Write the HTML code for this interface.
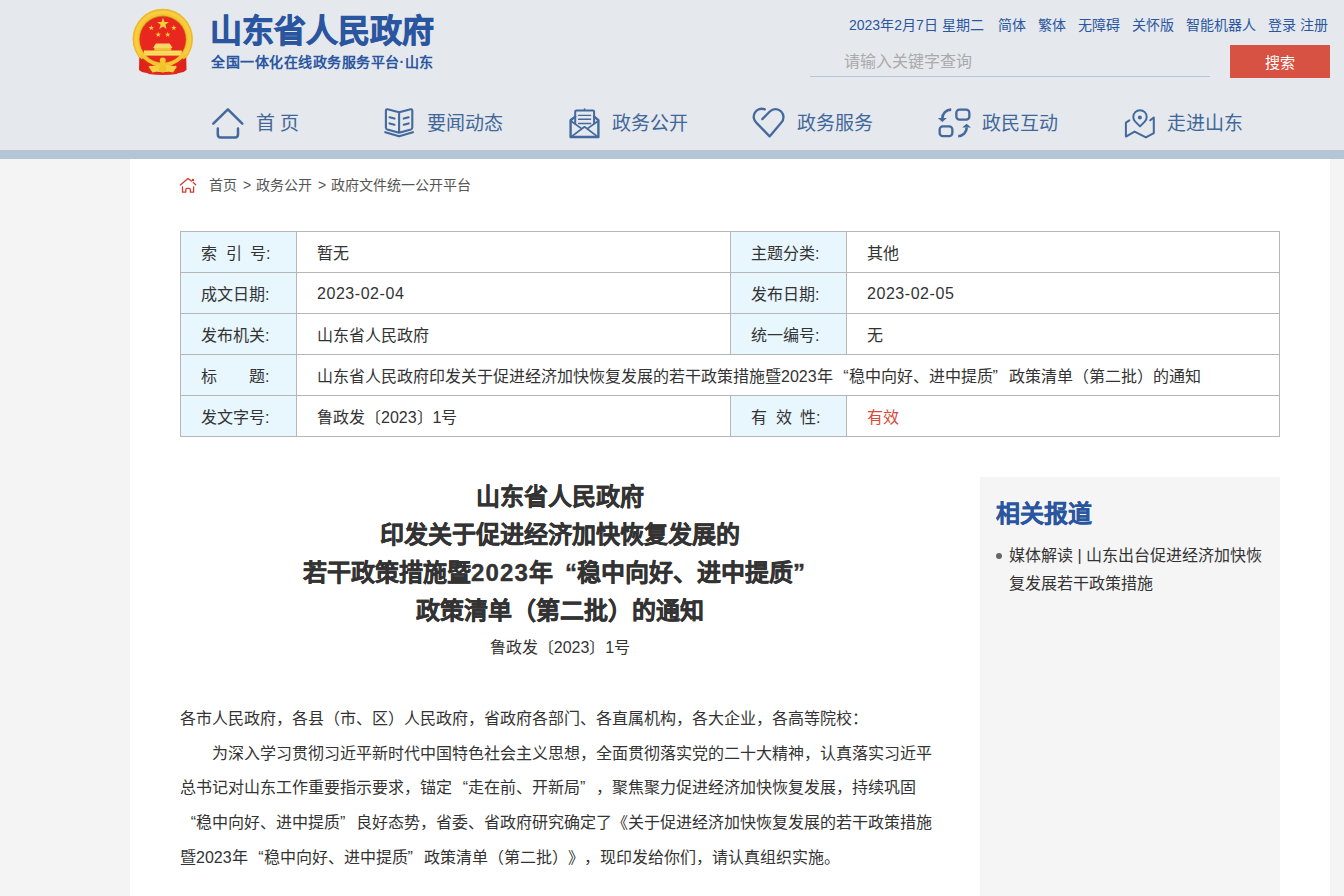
<!DOCTYPE html>
<html lang="zh-CN">
<head>
<meta charset="utf-8">
<title>山东省人民政府</title>
<style>
*{margin:0;padding:0;box-sizing:border-box}
html,body{width:1344px;height:896px;overflow:hidden}
body{text-spacing-trim:space-all;position:relative;background:#f4f4f4;font-family:"Liberation Sans",sans-serif;color:#333}
.abs{position:absolute;white-space:nowrap}
#hdr{position:absolute;left:0;top:0;width:1344px;height:150px;background:#e5e8ed}
#band{position:absolute;left:0;top:150px;width:1344px;height:9px;background:#b4c5d6}
#main{position:absolute;left:130px;top:159px;width:1200px;height:737px;background:#fff}
.t1{left:210px;top:11px;font-size:32px;font-weight:bold;color:#2a56a0;-webkit-text-stroke:0.8px #2a56a0;line-height:40px}
.t2{left:211px;top:52px;font-size:14px;font-weight:bold;color:#2a56a0;line-height:20px;letter-spacing:0.5px}
.top{top:15px;font-size:14px;color:#2a56a0;line-height:20px}
.srch{left:844px;top:51px;font-size:16px;color:#aaa;line-height:22px}
#uline{position:absolute;left:810px;top:76px;width:400px;height:1px;background:#b7c6d8}
#btn{position:absolute;left:1230px;top:45px;width:100px;height:33px;background:#d85243;color:#fff;font-size:15px;line-height:35px;text-align:center}
.nav{top:112px;font-size:19px;color:#3f6799;line-height:24px}
.bc{top:175px;font-size:14px;color:#555;line-height:20px}
table{position:absolute;left:180px;top:231px;width:1100px;border-collapse:collapse;font-size:16px;color:#333}
td{border:1px solid #b6b6b6;height:41px;padding:0 0 0 20px;white-space:nowrap}
td.l{background:#e8f6fe;width:116px}
.h{font-size:24px;font-weight:bold;color:#333;-webkit-text-stroke:0.4px #333;line-height:38px;text-align:center;left:180px;width:760px}
.p{font-size:16px;color:#333;line-height:34.7px}
#side{position:absolute;left:980px;top:477px;width:300px;height:419px;background:#f5f5f5}
.ql,.qr{display:inline-block;width:1em}.ql{text-align:right}.qr{text-align:left}
.g{display:inline-block;width:8.5px}.g2{display:inline-block;width:32px}
</style>
</head>
<body>
<div id="hdr"></div>
<div id="band"></div>
<div id="main"></div>

<!-- emblem -->
<svg class="abs" style="left:125px;top:0px" width="80" height="80" viewBox="0 0 80 80">
  <circle cx="37.75" cy="39" r="30.2" fill="#efb82c"/>
  <circle cx="37.75" cy="39" r="28.6" fill="#f7cf3e"/>
  <circle cx="37.75" cy="39" r="25.5" fill="#f4c435"/>
  <circle cx="37.75" cy="39.3" r="23.7" fill="#c9901a"/>
  <circle cx="37.75" cy="39.5" r="23" fill="#e8281e"/>
  <path d="M38.00,17.70 L39.46,21.89 L43.90,21.98 L40.36,24.67 L41.64,28.92 L38.00,26.38 L34.36,28.92 L35.64,24.67 L32.10,21.98 L36.54,21.89Z" fill="#f3cf3c"/>
  <path d="M26.30,25.00 L26.98,26.96 L29.06,27.00 L27.40,28.26 L28.00,30.25 L26.30,29.06 L24.60,30.25 L25.20,28.26 L23.54,27.00 L25.62,26.96Z" fill="#f3cf3c"/>
  <path d="M48.90,25.00 L49.58,26.96 L51.66,27.00 L50.00,28.26 L50.60,30.25 L48.90,29.06 L47.20,30.25 L47.80,28.26 L46.14,27.00 L48.22,26.96Z" fill="#f3cf3c"/>
  <path d="M33.20,31.70 L33.88,33.66 L35.96,33.70 L34.30,34.96 L34.90,36.95 L33.20,35.76 L31.50,36.95 L32.10,34.96 L30.44,33.70 L32.52,33.66Z" fill="#f3cf3c"/>
  <path d="M42.70,31.70 L43.38,33.66 L45.46,33.70 L43.80,34.96 L44.40,36.95 L42.70,35.76 L41.00,36.95 L41.60,34.96 L39.94,33.70 L42.02,33.66Z" fill="#f3cf3c"/>
  <path d="M28.2 48 L29.5 45.5 L31 43.4 H44.6 L46.1 45.5 L47.5 48 Z" fill="#f7d866"/>
  <rect x="29.3" y="48" width="17" height="2.6" fill="#f2c23a"/>
  <rect x="18.9" y="50.4" width="37.8" height="5.3" fill="#f5cc3a"/>
  <rect x="18.9" y="51.3" width="37.8" height="1.4" fill="#fbe27a"/>
  <rect x="20" y="53.6" width="35.6" height="1.2" fill="#fbe27a"/>
  <path d="M14.3 56 L24 61 L26 74 L17 72 L14 70 Z" fill="#de2418"/>
  <path d="M61.2 56 L51.5 61 L49.5 74 L58.5 72 L61.5 70 Z" fill="#de2418"/>
  <path d="M22 66 Q37.75 78 53.5 66 L52 74 Q37.75 76 23.5 74 Z" fill="#e02a1c"/>
  <path d="M14 55 Q37.75 76 61.5 55" fill="none" stroke="#f4c52e" stroke-width="3.6"/>
  <path d="M17 59 Q37.75 77 58.5 59" fill="none" stroke="#e02a1c" stroke-width="2.2"/>
  <circle cx="37.75" cy="60.6" r="3" fill="#f5c830"/>
  <path d="M23.5 66.5 Q37.75 64 52 66.5 L48 72.5 Q37.75 70 27.5 72.5 Z" fill="#f6d040"/>
  <circle cx="37.75" cy="68.8" r="3.8" fill="#f3c02a"/>
</svg>
<div class="abs t1">山东省人民政府</div>
<div class="abs t2">全国一体化在线政务服务平台·山东</div>

<div class="abs top" style="left:849px">2023年2月7日 星期二</div>
<div class="abs top" style="left:998px">简体</div>
<div class="abs top" style="left:1038px">繁体</div>
<div class="abs top" style="left:1078px">无障碍</div>
<div class="abs top" style="left:1132px">关怀版</div>
<div class="abs top" style="left:1186px">智能机器人</div>
<div class="abs top" style="left:1268px">登录 注册</div>

<div class="abs srch">请输入关键字查询</div>
<div id="uline"></div>
<div id="btn">搜索</div>

<!-- nav icons -->
<svg class="abs" style="left:210px;top:105px" width="36" height="36" viewBox="0 0 36 36" fill="none" stroke="#44699c" stroke-width="2.5" stroke-linecap="round" stroke-linejoin="round">
  <path d="M3.3 18.6 L17.9 4.4 L32.3 18.6"/><path d="M7.8 23.4 V29.6 Q7.8 32.5 10.6 32.5 H25.2 Q28 32.5 28 29.6 V23.4"/>
</svg>
<div class="abs nav" style="left:256px">首 页</div>
<svg class="abs" style="left:380px;top:104px" width="40" height="38" viewBox="0 0 40 38" fill="none" stroke="#44699c" stroke-width="2.1" stroke-linecap="round" stroke-linejoin="round">
  <path d="M19.1 8.3 L7.5 5.3 Q5.9 5 5.9 6.8 V23.5 Q5.9 25 7.3 25.5 L19.1 28.8 L30.9 25.5 Q32.3 25 32.3 23.5 V6.8 Q32.3 5 30.7 5.3 Z M19.1 8.3 V28.8"/>
  <path d="M5.3 28.2 L19.1 32.3 L32.9 28.2" stroke-width="2.2"/>
  <path d="M9.5 13.2 L14.5 14.6 M9.5 19.4 L14.5 20.8 M23.7 14.6 L28.7 13.2 M23.7 20.8 L28.7 19.4"/>
</svg>
<div class="abs nav" style="left:427px">要闻动态</div>
<svg class="abs" style="left:565px;top:104px" width="40" height="38" viewBox="0 0 40 38" fill="none" stroke="#44699c" stroke-linecap="round" stroke-linejoin="round">
  <path d="M10.2 19.5 V7.6 Q10.2 6.4 11.4 6.4 H27.9 Q29.1 6.4 29.1 7.6 V19.5" stroke-width="2"/>
  <circle cx="19.6" cy="5.2" r="0.9" fill="#44699c" stroke="none"/>
  <path d="M13.6 11.4 H25.6 M13.6 15.2 H25.6 M13.6 19.5 H25.6" stroke-width="1.4"/>
  <path d="M10.2 12.6 L5.6 16.2 V33 H33.4 V16.2 L29.1 12.6" stroke-width="2.4"/>
  <path d="M6.3 17.2 L16.2 24.4 M32.7 17.2 L22.8 24.4 M6.8 32.4 L19.5 22.8 L32.2 32.4" stroke-width="1.7"/>
</svg>
<div class="abs nav" style="left:612px">政务公开</div>
<svg class="abs" style="left:750px;top:104px" width="40" height="38" viewBox="0 0 40 38" fill="none" stroke="#44699c" stroke-width="2.3" stroke-linecap="round" stroke-linejoin="round">
  <path d="M14.85 5.4 A8 8 0 0 0 6.54 18.86 L19.6 32.4 L31.16 18.76 A8 8 0 0 0 19.84 7.44 L12.3 15.1"/>
</svg>
<div class="abs nav" style="left:797px">政务服务</div>
<svg class="abs" style="left:934px;top:104px" width="40" height="38" viewBox="0 0 40 38" fill="none" stroke="#44699c" stroke-width="2.3">
  <rect x="22.35" y="5.65" width="13" height="9.95" rx="3.2"/>
  <rect x="5.65" y="22.35" width="12.7" height="9.8" rx="3.2"/>
  <path d="M17.2 5.6 A8.8 8.8 0 0 0 8.3 14.4" stroke-width="2.6"/>
  <path d="M3.8 13.9 L12.8 13.9 L8.3 17.9 Z" fill="#44699c" stroke="none"/>
  <path d="M24.2 32.2 A8.5 8.5 0 0 0 32.7 23.6" stroke-width="2.6"/>
  <path d="M28.2 23.6 L37 23.6 L32.6 19.8 Z" fill="#44699c" stroke="none"/>
</svg>
<div class="abs nav" style="left:982px">政民互动</div>
<svg class="abs" style="left:1120px;top:104px" width="40" height="38" viewBox="0 0 40 38" fill="none" stroke="#44699c" stroke-width="2" stroke-linecap="round" stroke-linejoin="round">
  <path d="M20 22.4 L15.26 17.64 A6.7 6.7 0 1 1 24.74 17.64 Z"/><circle cx="19.9" cy="13.5" r="2" fill="#44699c" stroke="none"/>
  <path d="M9.4 16.4 L5.9 18.7 V32.6 L14.6 27.6 L25.9 33.4 L33.8 29.2 V13.5 L30.2 16.3"/>
</svg>
<div class="abs nav" style="left:1167px">走进山东</div>

<!-- breadcrumb -->
<svg class="abs" style="left:176px;top:174px" width="24" height="22" viewBox="0 0 24 22" fill="none" stroke="#d23c30" stroke-width="1.3" stroke-linecap="round" stroke-linejoin="round">
  <path d="M4.4 11 L12 4.4 L15.4 7.1 M17.2 8.4 L19.7 10.8"/><circle cx="17" cy="5.9" r="0.6" fill="#d23c30"/>
  <path d="M6.5 12.8 V18.2 H9.8 V15.6 Q9.8 14.3 11.1 14.3 H13.1 Q14.4 14.3 14.4 15.6 V18.2 H17.6 V12.8"/>
</svg>
<div class="abs bc" style="left:209px">首页</div><div class="abs bc" style="left:243px">&gt;</div><div class="abs bc" style="left:256px">政务公开</div><div class="abs bc" style="left:318px">&gt;</div><div class="abs bc" style="left:331px">政府文件统一公开平台</div>

<table>
<tr><td class="l">索<i class="g"></i>引<i class="g"></i>号:</td><td style="width:434px">暂无</td><td class="l">主题分类:</td><td>其他</td></tr>
<tr><td class="l">成文日期:</td><td><span style="letter-spacing:0.55px;position:relative;top:1px">2023-02-04</span></td><td class="l">发布日期:</td><td><span style="letter-spacing:0.55px;position:relative;top:1px">2023-02-05</span></td></tr>
<tr><td class="l">发布机关:</td><td>山东省人民政府</td><td class="l">统一编号:</td><td>无</td></tr>
<tr><td class="l">标<i class="g2"></i>题:</td><td colspan="3">山东省人民政府印发关于促进经济加快恢复发展的若干政策措施暨2023年<span class="ql">“</span>稳中向好、进中提质<span class="qr">”</span>政策清单（第二批）的通知</td></tr>
<tr><td class="l">发文字号:</td><td>鲁政发〔2023〕1号</td><td class="l">有<i class="g"></i>效<i class="g"></i>性:</td><td style="color:#d9493a">有效</td></tr>
</table>

<div class="abs h" style="top:478px">山东省人民政府<br>印发关于促进经济加快恢复发展的<br>若干政策措施暨<span style="letter-spacing:1.2px">2023</span>年<span class="ql">“</span>稳中向好、进中提质<span class="qr">”</span><br>政策清单（第二批）的通知</div>
<div class="abs" style="left:180px;width:760px;text-align:center;top:637px;font-size:16px;line-height:22px;color:#333">鲁政发〔2023〕1号</div>

<div class="abs p" style="left:180px;top:702px">各市人民政府，各县（市、区）人民政府，省政府各部门、各直属机构，各大企业，各高等院校：<br>
&emsp;&emsp;为深入学习贯彻习近平新时代中国特色社会主义思想，全面贯彻落实党的二十大精神，认真落实习近平<br>
总书记对山东工作重要指示要求，锚定<span class="ql">“</span>走在前、开新局<span class="qr">”</span>，聚焦聚力促进经济加快恢复发展，持续巩固<br>
<span class="ql">“</span>稳中向好、进中提质<span class="qr">”</span>良好态势，省委、省政府研究确定了《关于促进经济加快恢复发展的若干政策措施<br>
暨2023年<span class="ql">“</span>稳中向好、进中提质<span class="qr">”</span>政策清单（第二批）》，现印发给你们，请认真组织实施。</div>

<div id="side"></div>
<div class="abs" style="left:996px;top:498px;font-size:24px;font-weight:bold;color:#2a56a0;-webkit-text-stroke:0.25px #2a56a0;line-height:32px">相关报道</div>
<div class="abs" style="left:996px;top:553px;width:6px;height:6px;border-radius:50%;background:#666"></div>
<div class="abs" style="left:1009px;top:542px;font-size:16px;line-height:28px;color:#333">媒体解读 | 山东出台促进经济加快恢<br>复发展若干政策措施</div>
</body>
</html>
